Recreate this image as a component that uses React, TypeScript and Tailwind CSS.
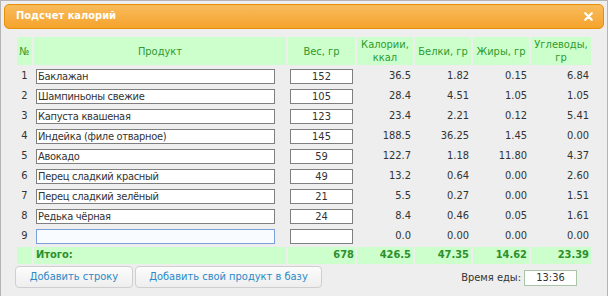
import React from "react";

const rows = [
  ["Баклажан", "152", "36.5", "1.82", "0.15", "6.84"],
  ["Шампиньоны свежие", "105", "28.4", "4.51", "1.05", "1.05"],
  ["Капуста квашеная", "123", "23.4", "2.21", "0.12", "5.41"],
  ["Индейка (филе отварное)", "145", "188.5", "36.25", "1.45", "0.00"],
  ["Авокадо", "59", "122.7", "1.18", "11.80", "4.37"],
  ["Перец сладкий красный", "49", "13.2", "0.64", "0.00", "2.60"],
  ["Перец сладкий зелёный", "21", "5.5", "0.27", "0.00", "1.51"],
  ["Редька чёрная", "24", "8.4", "0.46", "0.05", "1.61"],
  ["", "", "0.0", "0.00", "0.00", "0.00"],
];

const totals = ["426.5", "47.35", "14.62", "23.39"];

const font = "font-['DejaVu_Sans_Condensed','DejaVu_Sans',sans-serif]";

export default function App() {
  return (
    <div className={`h-[296px] w-[609px] overflow-hidden bg-white text-[11px] text-[#333] ${font}`}>
      <div className="h-[300px] w-[608px] border border-[#b4b4b4] bg-[#eeeeee] p-[3px]">
        {/* title bar */}
        <div className="flex h-[25px] items-center justify-between rounded-[5px] border border-[#e78f08] bg-gradient-to-b from-[#f8bb5a] to-[#f5a32a] pl-[11px] pr-[10px]">
          <span className="font-bold text-white">Подсчет калорий</span>
          <svg width="9" height="9" viewBox="0 0 9 9" aria-hidden>
            <path d="M1.3 1.3L7.7 7.7M7.7 1.3L1.3 7.7" stroke="#fff" strokeWidth="2.3" strokeLinecap="round" />
          </svg>
        </div>

        <div className="px-[11px] pt-[6px]">
          <table className="w-[578px] table-fixed border-separate border-spacing-[2px]">
            <colgroup>
              <col className="w-[15px]" />
              <col className="w-[252px]" />
              <col className="w-[67px]" />
              <col className="w-[56px]" />
              <col className="w-[56px]" />
              <col className="w-[56px]" />
              <col className="w-[60px]" />
            </colgroup>
            <thead>
              <tr className="h-[28px] bg-[#ccffcc] text-[#2e9b2e]">
                <th className="p-0 font-normal leading-[13px]">№</th>
                <th className="p-0 font-normal leading-[13px]">Продукт</th>
                <th className="p-0 font-normal leading-[13px]">Вес, гр</th>
                <th className="p-0 font-normal leading-[13px]">
                  Калории,
                  <br />
                  ккал
                </th>
                <th className="p-0 font-normal leading-[13px]">Белки, гр</th>
                <th className="p-0 font-normal leading-[13px]">Жиры, гр</th>
                <th className="p-0 font-normal leading-[13px]">
                  Углеводы,
                  <br />
                  гр
                </th>
              </tr>
            </thead>
            <tbody>
              {rows.map((r, i) => (
                <tr key={i} className="h-[18px]">
                  <td className="p-0 text-center">{i + 1}</td>
                  <td className="p-0 pl-[2px]">
                    <input
                      defaultValue={r[0]}
                      className={`box-border block h-[15px] w-[239px] border px-[1px] text-[11px] leading-[13px] tracking-[-0.3px] outline-none ${
                        i === 8 ? "border-[#7b9fdc] bg-[#f8fbff]" : "border-[#7f7f7f] bg-white"
                      }`}
                    />
                  </td>
                  <td className="p-0 pl-[2px]">
                    <input
                      defaultValue={r[1]}
                      className="box-border block h-[15px] w-[63px] border border-[#7f7f7f] bg-white px-[1px] text-center text-[11px] leading-[13px] outline-none"
                    />
                  </td>
                  {r.slice(2).map((v, j) => (
                    <td key={j} className="p-0 pr-[2px] text-right">
                      {v}
                    </td>
                  ))}
                </tr>
              ))}
              <tr className="h-[17px] bg-[#ccffcc] font-bold text-[#2d8f2d]">
                <td className="p-0"></td>
                <td className="p-0 pl-[2px]">Итого:</td>
                <td className="p-0 pr-[1px] text-right">678</td>
                {totals.map((v) => (
                  <td key={v} className="p-0 pr-[2px] text-right">
                    {v}
                  </td>
                ))}
              </tr>
            </tbody>
          </table>

          <div className="flex items-start justify-between">
            <div className="flex gap-[2px]">
              <button className="h-[22px] w-[118px] rounded-[4px] border border-[#cfcfcf] bg-gradient-to-b from-[#fcfcfc] to-[#eeeeee] text-[11px] text-[#2b8ac6]">
                Добавить строку
              </button>
              <button className="h-[22px] w-[187px] rounded-[4px] border border-[#cfcfcf] bg-gradient-to-b from-[#fcfcfc] to-[#eeeeee] text-[11px] text-[#2b8ac6]">
                Добавить свой продукт в базу
              </button>
            </div>
            <div className="mr-[16px] mt-[4px] flex items-center gap-[3px]">
              <span>Время еды:</span>
              <input
                defaultValue="13:36"
                className="box-border block h-[16px] w-[53px] border border-[#a9c6a9] bg-white text-center text-[11px] outline-none"
              />
            </div>
          </div>
        </div>
      </div>
    </div>
  );
}
